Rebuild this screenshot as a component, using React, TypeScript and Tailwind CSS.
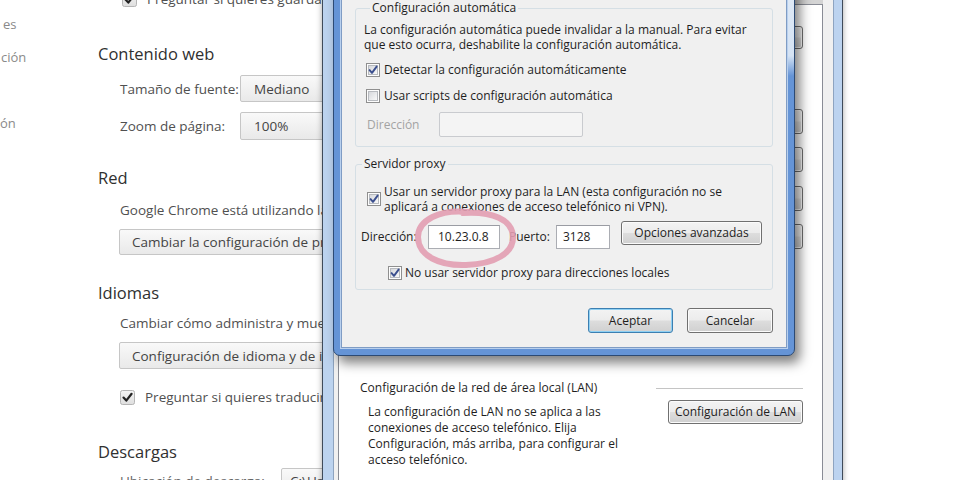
import React from "react";

function WinCheck({ checked }: { checked: boolean }) {
  return (
    <svg width="14" height="14" viewBox="0 0 14 14" className="shrink-0">
      <defs>
        <linearGradient id="wcg" x1="0" y1="0" x2="1" y2="1">
          <stop offset="0" stopColor="#d4d6da" />
          <stop offset="1" stopColor="#fbfbfb" />
        </linearGradient>
      </defs>
      <rect x="0.5" y="0.5" width="13" height="13" fill="#fdfdfd" stroke="#8f8f8f" />
      <rect x="2.5" y="2.5" width="9" height="9" fill="url(#wcg)" stroke="#b7babf" />
      {checked && (
        <path d="M3.6 7.1 L6 9.9 L10.6 3.6" fill="none" stroke="#3b4f8e" strokeWidth="1.9" strokeLinecap="round" strokeLinejoin="round" />
      )}
    </svg>
  );
}

function ChromeCheck() {
  return (
    <svg width="15" height="15" viewBox="0 0 15 15" className="shrink-0">
      <defs>
        <linearGradient id="ccg" x1="0" y1="0" x2="0" y2="1">
          <stop offset="0" stopColor="#f4f4f4" />
          <stop offset="1" stopColor="#dedede" />
        </linearGradient>
      </defs>
      <rect x="0.5" y="0.5" width="14" height="14" rx="2" fill="url(#ccg)" stroke="#b5b5b5" />
      <path d="M3.5 7.6 L6.3 10.6 L11.6 3.8" fill="none" stroke="#222" strokeWidth="2.2" strokeLinecap="round" strokeLinejoin="round" />
    </svg>
  );
}

function WinButton({ children, className, focused }: { children: React.ReactNode; className: string; focused?: boolean }) {
  return (
    <div
      className={
        "flex items-center justify-center rounded-[3px] border bg-[linear-gradient(#f3f3f3_0%,#ececec_48%,#dddddd_52%,#d0d0d0_100%)] text-[#1e1e1e] whitespace-nowrap overflow-hidden " +
        (focused ? "border-[#3c7fb1] shadow-[inset_0_0_0_1px_#8fd0f3]" : "border-[#707070] shadow-[inset_0_0_0_1px_#fbfbfb]") +
        " " +
        className
      }
    >
      {children}
    </div>
  );
}

function TextBox({ children, className }: { children?: React.ReactNode; className: string }) {
  return (
    <div className={"flex items-center border border-[#abadb3] border-t-[#9a9ca3] bg-white text-[#1e1e1e] " + className}>
      {children}
    </div>
  );
}

export default function App() {
  return (
    <div className="relative w-[960px] h-[480px] overflow-hidden bg-white font-['Open_Sans',sans-serif]">
      {/* Chrome settings page */}
      <div className="flex h-full text-[#505050]">
        <div className="w-[98px] shrink-0 flex flex-col text-[13px] text-[#8a8a8a]">
          <div className="mt-[15px] h-[18px] leading-[18px] pl-[3px]">es</div>
          <div className="mt-[15px] h-[18px] leading-[18px] pl-[1px]">ción</div>
          <div className="mt-[48px] h-[18px] leading-[18px]">ón</div>
        </div>
        <div className="flex flex-col -mt-[11px] flex-1 whitespace-nowrap text-[13.5px]">
          <div className="h-[22px] flex items-center pl-[24px] gap-[10px]">
            <ChromeCheck />
            <span>Preguntar si quieres guardar las contraseñas</span>
          </div>
          <div className="mt-[33px] h-[24px] flex items-center text-[16.5px] text-[#303030]">Contenido web</div>
          <div className="mt-[9px] h-[27px] flex items-center pl-[22px]">
            <span className="w-[120px]">Tamaño de fuente:</span>
            <div className="h-[27px] w-[130px] flex items-center pl-[13px] border border-[#c6c6c6] rounded-[2px] bg-[linear-gradient(#f9f9f9,#e9e9e9)] text-[#444]">Mediano</div>
          </div>
          <div className="mt-[10px] h-[28px] flex items-center pl-[22px]">
            <span className="w-[120px]">Zoom de página:</span>
            <div className="h-[28px] w-[130px] flex items-center pl-[13px] border border-[#c6c6c6] rounded-[2px] bg-[linear-gradient(#f9f9f9,#e9e9e9)] text-[#444]">100%</div>
          </div>
          <div className="mt-[26px] h-[24px] flex items-center text-[16.5px] text-[#303030]">Red</div>
          <div className="mt-[10px] h-[20px] flex items-center pl-[22px]">Google Chrome está utilizando la configuración de proxy</div>
          <div className="mt-[9px] pl-[21px]">
            <div className="h-[26px] w-[260px] flex items-center pl-[12px] border border-[#c6c6c6] rounded-[2px] bg-[linear-gradient(#f9f9f9,#e9e9e9)] text-[#444]">Cambiar la configuración de proxy...</div>
          </div>
          <div className="mt-[26px] h-[24px] flex items-center text-[16.5px] text-[#303030]">Idiomas</div>
          <div className="mt-[8px] h-[20px] flex items-center pl-[22px]">Cambiar cómo administra y muestra idiomas Chrome</div>
          <div className="mt-[9px] pl-[21px]">
            <div className="h-[27px] w-[260px] flex items-center pl-[12px] border border-[#c6c6c6] rounded-[2px] bg-[linear-gradient(#f9f9f9,#e9e9e9)] text-[#444]">Configuración de idioma y de introducción</div>
          </div>
          <div className="mt-[18px] h-[20px] flex items-center pl-[22px] gap-[10px]">
            <ChromeCheck />
            <span>Preguntar si quieres traducir páginas</span>
          </div>
          <div className="mt-[33px] h-[24px] flex items-center text-[16.5px] text-[#303030]">Descargas</div>
          <div className="mt-[4px] h-[26px] flex items-center pl-[22px]">
            <span className="w-[161px] text-[#666]">Ubicación de descarga:</span>
            <div className="h-[26px] w-[100px] flex items-center pl-[8px] border border-[#c6c6c6] rounded-[2px] bg-[linear-gradient(#f9f9f9,#e9e9e9)] text-[#444]">C:\Users</div>
          </div>
        </div>
      </div>

      {/* Internet Options window (behind) */}
      <div className="absolute left-[322px] top-[-40px] w-[521px] h-[560px] border border-[#3f4b5a] bg-[#bcd3ef] pl-[10px] pr-[8px] pt-[10px] shadow-[0_0_6px_rgba(0,0,0,0.35)]">
        <div className="flex flex-col h-full border border-[#8ea4c0] bg-[#f0f0f0] pl-[4px] pr-[10px]">
          <div className="h-[32px] shrink-0 bg-[#d4d4d4]" />
          <div className="flex flex-col flex-1 border border-[#898c95] bg-white text-[12px] text-[#1e1e1e]">
            <div className="flex flex-col items-end pr-[19px]">
              <WinButton className="mt-[21px] h-[23px] w-[100px]">Configurar</WinButton>
              <WinButton className="mt-[60px] h-[25px] w-[100px]">Agregar...</WinButton>
              <WinButton className="mt-[13px] h-[25px] w-[100px]">Agregar VPN...</WinButton>
              <WinButton className="mt-[14px] h-[25px] w-[100px]">Quitar...</WinButton>
              <WinButton className="mt-[13px] h-[25px] w-[100px]">Configuración</WinButton>
            </div>
            <div className="mt-[131px] h-[16px] flex items-center">
              <span className="pl-[21px] whitespace-nowrap">Configuración de la red de área local (LAN)</span>
              <div className="ml-auto mr-[19px] w-[147px] h-px bg-[#c4c4c4]" />
            </div>
            <div className="mt-[4px] flex items-start">
              <p className="pl-[29px] mt-[4px] leading-[16px] whitespace-nowrap">
                La configuración de LAN no se aplica a las
                <br />
                conexiones de acceso telefónico. Elija
                <br />
                Configuración, más arriba, para configurar el
                <br />
                acceso telefónico.
              </p>
              <WinButton className="ml-auto mr-[19px] h-[24px] w-[135px]">Configuración de LAN</WinButton>
            </div>
          </div>
        </div>
      </div>

      {/* LAN settings dialog */}
      <div className="absolute left-[333px] top-[-60px] w-[462px] h-[416px] border border-[#2c4a74] rounded-b-[7px] bg-[#6594d6] px-[7px] pb-[7px] pt-[30px] shadow-[5px_7px_12px_rgba(0,0,0,0.5)]">
        <div className="absolute right-0 top-0 w-[8px] h-[135px] bg-[linear-gradient(#e6eef8,#d5e3f4_85%,#6594d6)]" />
        <div className="relative flex flex-col h-full border border-[#7f9cc4] bg-[#f0f0f0] px-[13px] pt-[28px] text-[12px] text-[#1e1e1e] whitespace-nowrap shadow-[0_0_0_1px_#b9d0ee]">
          <fieldset className="border border-[#d5dfe5] rounded-[3px] pl-[8px] pb-[9px]">
            <legend className="ml-[6px] px-[2px] h-[16px] leading-[16px]">Configuración automática</legend>
            <p className="mt-[6px] leading-[15px]">
              La configuración automática puede invalidar a la manual. Para evitar
              <br />
              que esto ocurra, deshabilite la configuración automática.
            </p>
            <div className="mt-[10px] h-[16px] flex items-center gap-[4px] ml-[2px]">
              <WinCheck checked={true} />
              <span>Detectar la configuración automáticamente</span>
            </div>
            <div className="mt-[10px] h-[16px] flex items-center gap-[4px] ml-[2px]">
              <WinCheck checked={false} />
              <span>Usar scripts de configuración automática</span>
            </div>
            <div className="mt-[8px] flex items-center">
              <span className="pl-[3px] w-[75px] text-[#a3a3a3]">Dirección</span>
              <div className="h-[25px] w-[144px] border border-[#c9cbcf] rounded-[2px] bg-[#f4f4f4]" />
            </div>
          </fieldset>

          <fieldset className="mt-[9px] border border-[#d5dfe5] rounded-[3px] pb-[8px]">
            <legend className="ml-[6px] px-[2px] h-[16px] leading-[16px]">Servidor proxy</legend>
            <div className="mt-[12px] pl-[11px] flex items-center gap-[3px]">
              <WinCheck checked={true} />
              <span className="leading-[15px]">
                Usar un servidor proxy para la LAN (esta configuración no se
                <br />
                aplicará a conexiones de acceso telefónico ni VPN).
              </span>
            </div>
            <div className="mt-[7px] pl-[5px] flex items-start">
              <span className="mt-[4px] h-[24px] w-[67px] flex items-center">Dirección:</span>
              <TextBox className="mt-[4px] h-[24px] w-[72px] pl-[9px]">10.23.0.8</TextBox>
              <span className="mt-[4px] ml-[9px] h-[24px] w-[47px] flex items-center">Puerto:</span>
              <TextBox className="mt-[4px] h-[24px] w-[54px] pl-[6px]">3128</TextBox>
              <WinButton className="ml-[11px] h-[24px] w-[141px]">Opciones avanzadas</WinButton>
            </div>
            <div className="mt-[16px] pl-[32px] h-[16px] flex items-center gap-[3px]">
              <WinCheck checked={true} />
              <span>No usar servidor proxy para direcciones locales</span>
            </div>
          </fieldset>

          <div className="mt-[18px] flex justify-end gap-[14px]">
            <WinButton focused className="h-[25px] w-[85px]">Aceptar</WinButton>
            <WinButton className="h-[25px] w-[86px]">Cancelar</WinButton>
          </div>
        </div>
      </div>

      {/* pink hand-drawn highlight */}
      <svg className="absolute left-[411px] top-[205px]" width="110" height="66" viewBox="0 0 110 66">
        <path
          d="M57 7 C29 4 7 15 7 32 C7 51 29 61 55 60 C84 59 103 48 102 31 C101 15 82 6 52 8"
          fill="none"
          stroke="#e29db1"
          strokeWidth="6"
          strokeLinecap="round"
          opacity="0.9"
        />
      </svg>
    </div>
  );
}
